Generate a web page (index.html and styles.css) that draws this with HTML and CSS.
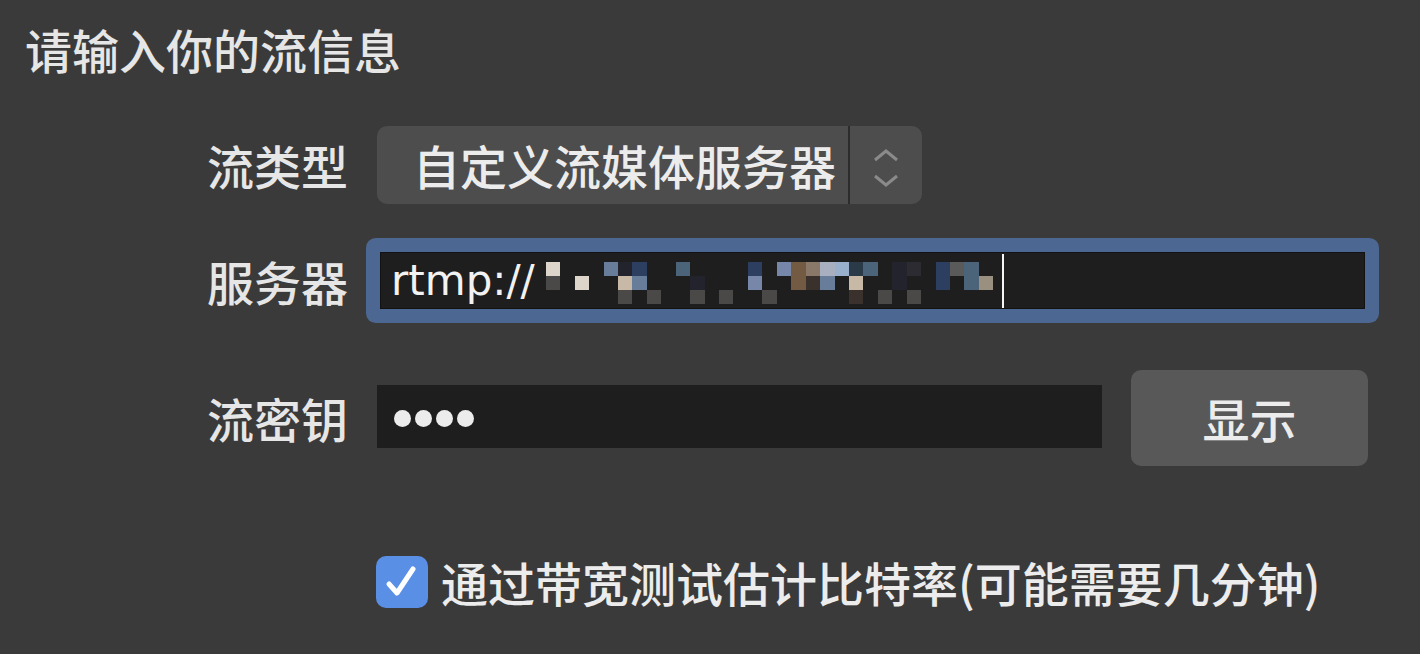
FILE: index.html
```html
<!DOCTYPE html>
<html lang="zh-CN">
<head>
<meta charset="utf-8">
<title>流信息</title>
<link rel="stylesheet" href="styles.css">
</head>
<body>
<div class="panel">
  <div class="title">请输入你的流信息</div>

  <div class="row row-type">
    <div class="label">流类型</div>
    <div class="select">
      <div class="select-value">自定义流媒体服务器</div>
      <div class="select-arrows">
        <svg width="26" height="42" viewBox="0 0 26 42">
          <path d="M2 14 L13 5 L24 14" fill="none" stroke="#8a8a8a" stroke-width="3"/>
          <path d="M2 30 L13 39 L24 30" fill="none" stroke="#8a8a8a" stroke-width="3"/>
        </svg>
      </div>
    </div>
  </div>

  <div class="row row-server">
    <div class="label">服务器</div>
    <div class="field field-focus">
      <span class="field-text">rtmp://</span>
      <div class="mosaic">
        <i class="w"></i><i></i><i></i><i></i><i class="s"></i><i class="d"></i><i class="n"></i><i></i><i></i><i class="t"></i><i></i><i></i><i></i><i></i><i class="n"></i><i></i><i class="s2"></i><i class="br"></i><i class="br2"></i><i class="lb"></i><i class="lb2"></i><i class="dt"></i><i class="t"></i><i></i><i class="d"></i><i class="d2"></i><i></i><i class="n"></i><i class="g2"></i><i class="t"></i><i></i>
        <i class="g"></i><i></i><i class="w"></i><i></i><i></i><i class="bg2"></i><i class="s"></i><i></i><i></i><i></i><i class="d"></i><i></i><i></i><i></i><i class="s2"></i><i></i><i></i><i class="br"></i><i class="db"></i><i class="s"></i><i></i><i class="bg2"></i><i></i><i></i><i class="d"></i><i></i><i></i><i class="n"></i><i></i><i class="t"></i><i class="tan"></i>
        <i></i><i></i><i></i><i></i><i></i><i class="g"></i><i></i><i class="g"></i><i></i><i></i><i class="g"></i><i></i><i class="g"></i><i></i><i></i><i class="g"></i><i></i><i></i><i></i><i></i><i></i><i class="db"></i><i></i><i class="g"></i><i></i><i class="g"></i><i></i><i></i><i></i><i></i><i></i>
      </div>
      <span class="caret"></span>
    </div>
  </div>

  <div class="row row-key">
    <div class="label">流密钥</div>
    <div class="field field-key">
      <span class="dots" aria-label="••••"><b></b><b></b><b></b><b></b></span>
    </div>
    <div class="button">显示</div>
  </div>

  <div class="row row-check">
    <div class="checkbox">
      <svg width="52" height="52" viewBox="0 0 52 52">
        <path d="M13 28 L21 37 L37 13" fill="none" stroke="#ffffff" stroke-width="5" stroke-linecap="round" stroke-linejoin="round"/>
      </svg>
    </div>
    <div class="check-label">通过带宽测试估计比特率(可能需要几分钟)</div>
  </div>
</div>
</body>
</html>
```

FILE: styles.css
```css
html, body {
  margin: 0;
  padding: 0;
  background: #3a3a3a;
}

body {
  width: 1420px;
  height: 654px;
  overflow: hidden;
  font-family: "Noto Sans CJK SC", "Noto Sans", sans-serif;
  font-weight: 500;
  color: #e6e6e6;
}

.panel {
  padding-top: 26px;
}

.title {
  font-size: 47px;
  line-height: 46px;
  padding-left: 25px;
}

.row {
  display: flex;
  align-items: center;
}

.label {
  width: 348px;
  margin-right: 29px;
  text-align: right;
  font-size: 47px;
  line-height: 46px;
  flex: none;
}

.row-type {
  margin-top: 54px;
  height: 78px;
}

.select {
  width: 545px;
  height: 78px;
  background: #4d4d4d;
  border-radius: 10px;
  display: flex;
  align-items: stretch;
  box-sizing: border-box;
}

.select-value {
  flex: 1;
  display: flex;
  align-items: center;
  padding-left: 36px;
  font-size: 47px;
  line-height: 46px;
  color: #ececec;
  border-right: 2px solid #2c2c2c;
}

.select-arrows {
  width: 72px;
  display: flex;
  align-items: center;
  justify-content: center;
  padding-top: 4px;
  box-sizing: border-box;
}

.row-server {
  margin-top: 45px;
  height: 63px;
}

.field {
  background: #1e1e1e;
  height: 63px;
  box-sizing: border-box;
  display: flex;
  align-items: center;
}

.field-focus {
  width: 991px;
  border: 3px solid #4b6792;
  border-radius: 3px;
  box-shadow: inset 0 0 0 1px #121212, 0 0 0 11px #4b6792;
  padding-left: 11px;
}

.field-text {
  font-family: "DejaVu Sans", sans-serif;
  font-weight: 400;
  font-size: 42px;
  line-height: 50px;
  color: #f2f2f2;
}

.mosaic {
  display: grid;
  grid-template-columns: repeat(31, 14.45px);
  grid-template-rows: repeat(3, 14px);
  margin-left: 11px;
  margin-top: 5px;
}

.mosaic i { display: block; }
.mosaic .w { background: #ddd5c9; }
.mosaic .s { background: #687d99; }
.mosaic .s2 { background: #7787aa; }
.mosaic .n { background: #2c3f60; }
.mosaic .d { background: #23232e; }
.mosaic .d2 { background: #2b2b31; }
.mosaic .t { background: #4b6479; }
.mosaic .dt { background: #2a3a48; }
.mosaic .br { background: #725a43; }
.mosaic .br2 { background: #8a7868; }
.mosaic .lb { background: #a8b0c0; }
.mosaic .lb2 { background: #98b0cc; }
.mosaic .g { background: #4b4947; }
.mosaic .g2 { background: #5a5a5a; }
.mosaic .bg2 { background: #c8b8a6; }
.mosaic .db { background: #3a312d; }
.mosaic .tan { background: #9a9080; }

.caret {
  width: 2px;
  height: 54px;
  background: #f5f5f5;
  margin-left: 9px;
}

.row-key {
  margin-top: 58px;
  height: 96px;
  align-items: flex-start;
}

.row-key .label {
  margin-top: 25px;
}

.field-key {
  width: 725px;
  margin-top: 15px;
  padding-left: 17px;
}

.dots {
  display: flex;
  gap: 4px;
  margin-top: 4px;
}

.dots b {
  width: 17px;
  height: 17px;
  border-radius: 50%;
  background: #ececec;
  display: block;
}

.button {
  margin-left: 29px;
  width: 237px;
  height: 96px;
  background: #585858;
  border-radius: 10px;
  display: flex;
  align-items: center;
  justify-content: center;
  font-size: 47px;
  line-height: 46px;
  color: #ececec;
}

.row-check {
  margin-top: 90px;
  padding-left: 376px;
  height: 52px;
}

.checkbox {
  width: 52px;
  height: 52px;
  border-radius: 10px;
  background: #5a8fe6;
  flex: none;
}

.checkbox svg { display: block; }

.check-label {
  margin-left: 13px;
  font-size: 47px;
  line-height: 46px;
  color: #ececec;
}
```
